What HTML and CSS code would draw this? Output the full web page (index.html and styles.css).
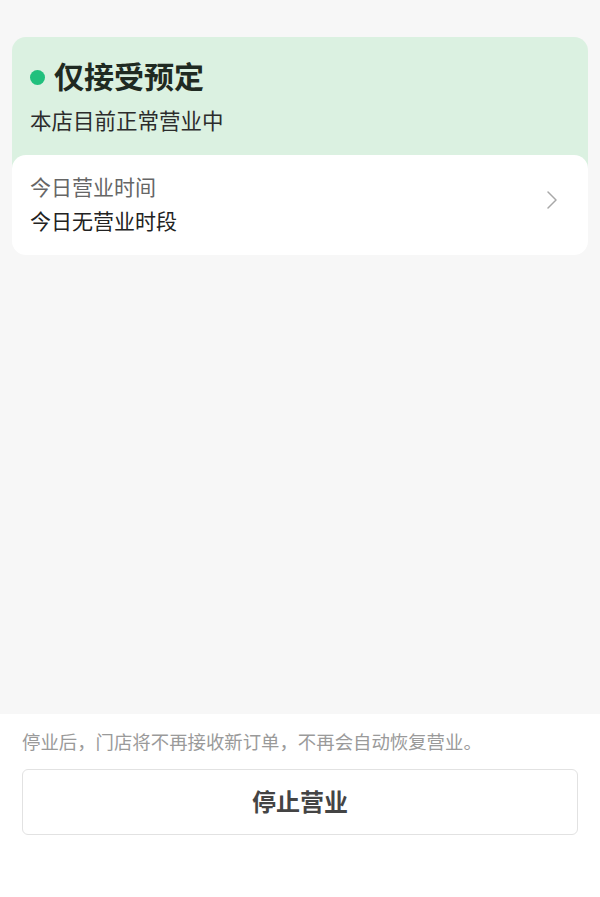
FILE: index.html
```html
<!DOCTYPE html>
<html lang="zh-CN">
<head>
    <meta charset="UTF-8">
    <title>营业状态</title>
    <link rel="stylesheet" href="styles.css">
</head>
<body>
<div class="page">
    <div class="content">
        <div class="status-card">
            <div class="status-head">
                <h2 class="status-title"><span class="dot"></span>仅接受预定</h2>
                <p class="status-desc">本店目前正常营业中</p>
            </div>
            <div class="hours-row">
                <div class="hours-text">
                    <p class="hours-label">今日营业时间</p>
                    <p class="hours-value">今日无营业时段</p>
                </div>
                <svg class="chevron" width="12" height="20" viewBox="0 0 12 20">
                    <path d="M2 2 L10 10 L2 18" fill="none" stroke="#a8a8a8" stroke-width="1.5" stroke-linecap="round" stroke-linejoin="round"/>
                </svg>
            </div>
        </div>
    </div>
    <div class="footer">
        <p class="footer-note">停业后，门店将不再接收新订单，不再会自动恢复营业。</p>
        <button class="stop-btn">停止营业</button>
    </div>
</div>
</body>
</html>
```

FILE: styles.css
```css
* { box-sizing: border-box; }
body {
    margin: 0;
    background: #f7f7f7;
    font-family: "Noto Sans CJK SC", "Noto Sans", sans-serif;
    color: #222;
}
p, h2 { margin: 0; }
.page {
    min-height: 100vh;
    display: flex;
    flex-direction: column;
}
.content {
    flex: 1;
    padding: 37px 12px 0;
}
.status-head {
    background: #dbf1e1;
    border-radius: 14px 14px 0 0;
    padding: 18px 18px 34px;
}
.status-title {
    display: flex;
    align-items: center;
    font-size: 30px;
    line-height: 40px;
    font-weight: bold;
    color: #1f2a22;
}
.dot {
    width: 15px;
    height: 15px;
    border-radius: 50%;
    background: #21c07d;
    margin-right: 9px;
    margin-top: 4px;
}
.status-desc {
    margin-top: 10px;
    font-size: 21.5px;
    line-height: 30px;
    color: #2c2c2c;
}
.hours-row {
    margin-top: -14px;
    background: #fff;
    border-radius: 14px;
    padding: 16px 30px 20px 18px;
    display: flex;
    align-items: center;
    justify-content: space-between;
}
.hours-label {
    font-size: 21px;
    line-height: 30px;
    color: #666;
}
.hours-value {
    margin-top: 4px;
    font-size: 21px;
    line-height: 30px;
    color: #222;
}
.chevron {
    margin-top: -7px;
}
.footer {
    background: #fff;
    padding: 14px 22px 62px;
}
.footer-note {
    font-size: 18.4px;
    line-height: 26px;
    color: #9a9a9a;
}
.stop-btn {
    display: block;
    width: 100%;
    height: 66px;
    margin-top: 15px;
    padding: 0 0 3px;
    background: #fff;
    border: 1.5px solid #e2e2e2;
    border-radius: 6px;
    font-family: inherit;
    font-size: 24px;
    font-weight: bold;
    color: #444;
    cursor: pointer;
}
```
